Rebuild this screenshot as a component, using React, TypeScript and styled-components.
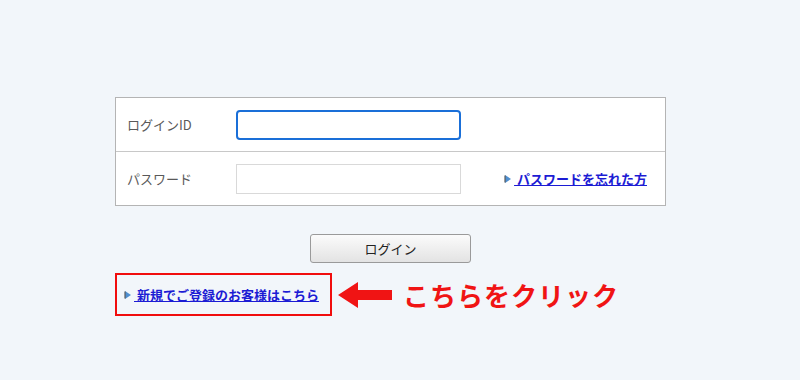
import React from 'react';
import styled, { createGlobalStyle } from 'styled-components';

const GlobalStyle = createGlobalStyle`
  body {
    margin: 0;
    background: #f2f6fa;
    font-family: "Noto Sans CJK JP", "Noto Sans", sans-serif;
    color: #555;
  }
`

const Page = styled.div`
  width: 551px;
  padding: 97px 0 0 115px;
`

const FormTable = styled.div`
  background: #fff;
  border: 1px solid #b4b4b4;
`

const Row = styled.div<{ $first?: boolean }>`
  display: grid;
  grid-template-columns: 109px 225px 1fr;
  align-items: center;
  height: 53px;
  padding-left: 11px;
  border-top: ${p => (p.$first ? 'none' : '1px solid #c8c8c8')};
`

const Label = styled.span`
  font-size: 13px;
  color: #595959;
`

const Input = styled.input<{ $focused?: boolean }>`
  box-sizing: border-box;
  width: 225px;
  height: 30px;
  margin: 0;
  background: #fff;
  outline: none;
  border: ${p => (p.$focused ? '2px solid #1a6fd8' : '1px solid #d9d9d9')};
  border-radius: ${p => (p.$focused ? '4px' : '0')};
`

const LinkCell = styled.div`
  justify-self: end;
  padding-right: 18px;
  display: flex;
  align-items: center;
`

const TextLink = styled.a`
  display: inline-flex;
  align-items: center;
  font-size: 13px;
  font-weight: 700;
  color: #1c1cd4;
  text-decoration: underline;
  white-space: pre;
`

const ButtonRow = styled.div`
  display: flex;
  justify-content: center;
  margin-top: 28px;
`

const LoginButton = styled.button`
  width: 161px;
  height: 29px;
  border: 1px solid #9a9a9a;
  border-radius: 3px;
  background: linear-gradient(#fbfbfb, #e3e3e3);
  font-family: inherit;
  font-size: 13px;
  color: #222;
`

const BottomRow = styled.div`
  display: flex;
  align-items: center;
  margin-top: 10px;
`

const RegisterBox = styled.div`
  box-sizing: border-box;
  width: 217px;
  height: 43px;
  border: 2px solid #f10d0d;
  padding-left: 7px;
  display: flex;
  align-items: center;
`

const Callout = styled.span`
  margin-left: 11px;
  font-size: 26px;
  font-weight: 700;
  letter-spacing: 1px;
  color: #f01414;
  white-space: nowrap;
`

const ArrowWrap = styled.svg`
  margin-left: 6px;
  display: block;
`

const Marker = () => (
  <svg width="8" height="8" viewBox="0 0 8 8" style={{ marginRight: 2, display: 'block' }}>
    <polygon points="1,0 7,4 1,8" fill="#4f8fd0" />
    <line x1="1" y1="0.5" x2="1" y2="7.5" stroke="#5a5a5a" strokeWidth="1.2" />
  </svg>
)

const App: React.FC = () => {
  return (
    <>
      <GlobalStyle />
      <Page>
        <FormTable>
          <Row $first>
            <Label>ログインID</Label>
            <Input type="text" $focused />
          </Row>
          <Row>
            <Label>パスワード</Label>
            <Input type="password" />
            <LinkCell>
              <Marker />
              <TextLink href="#">{' パスワードを忘れた方'}</TextLink>
            </LinkCell>
          </Row>
        </FormTable>
        <ButtonRow>
          <LoginButton type="button">ログイン</LoginButton>
        </ButtonRow>
        <BottomRow>
          <RegisterBox>
            <Marker />
            <TextLink href="#">{' 新規でご登録のお客様はこちら'}</TextLink>
          </RegisterBox>
          <ArrowWrap width="54" height="26" viewBox="0 0 54 26">
            <polygon points="0,13 20,0 20,8 54,8 54,18 20,18 20,26" fill="#f01414" />
          </ArrowWrap>
          <Callout>こちらをクリック</Callout>
        </BottomRow>
      </Page>
    </>
  );
}

export default App;
